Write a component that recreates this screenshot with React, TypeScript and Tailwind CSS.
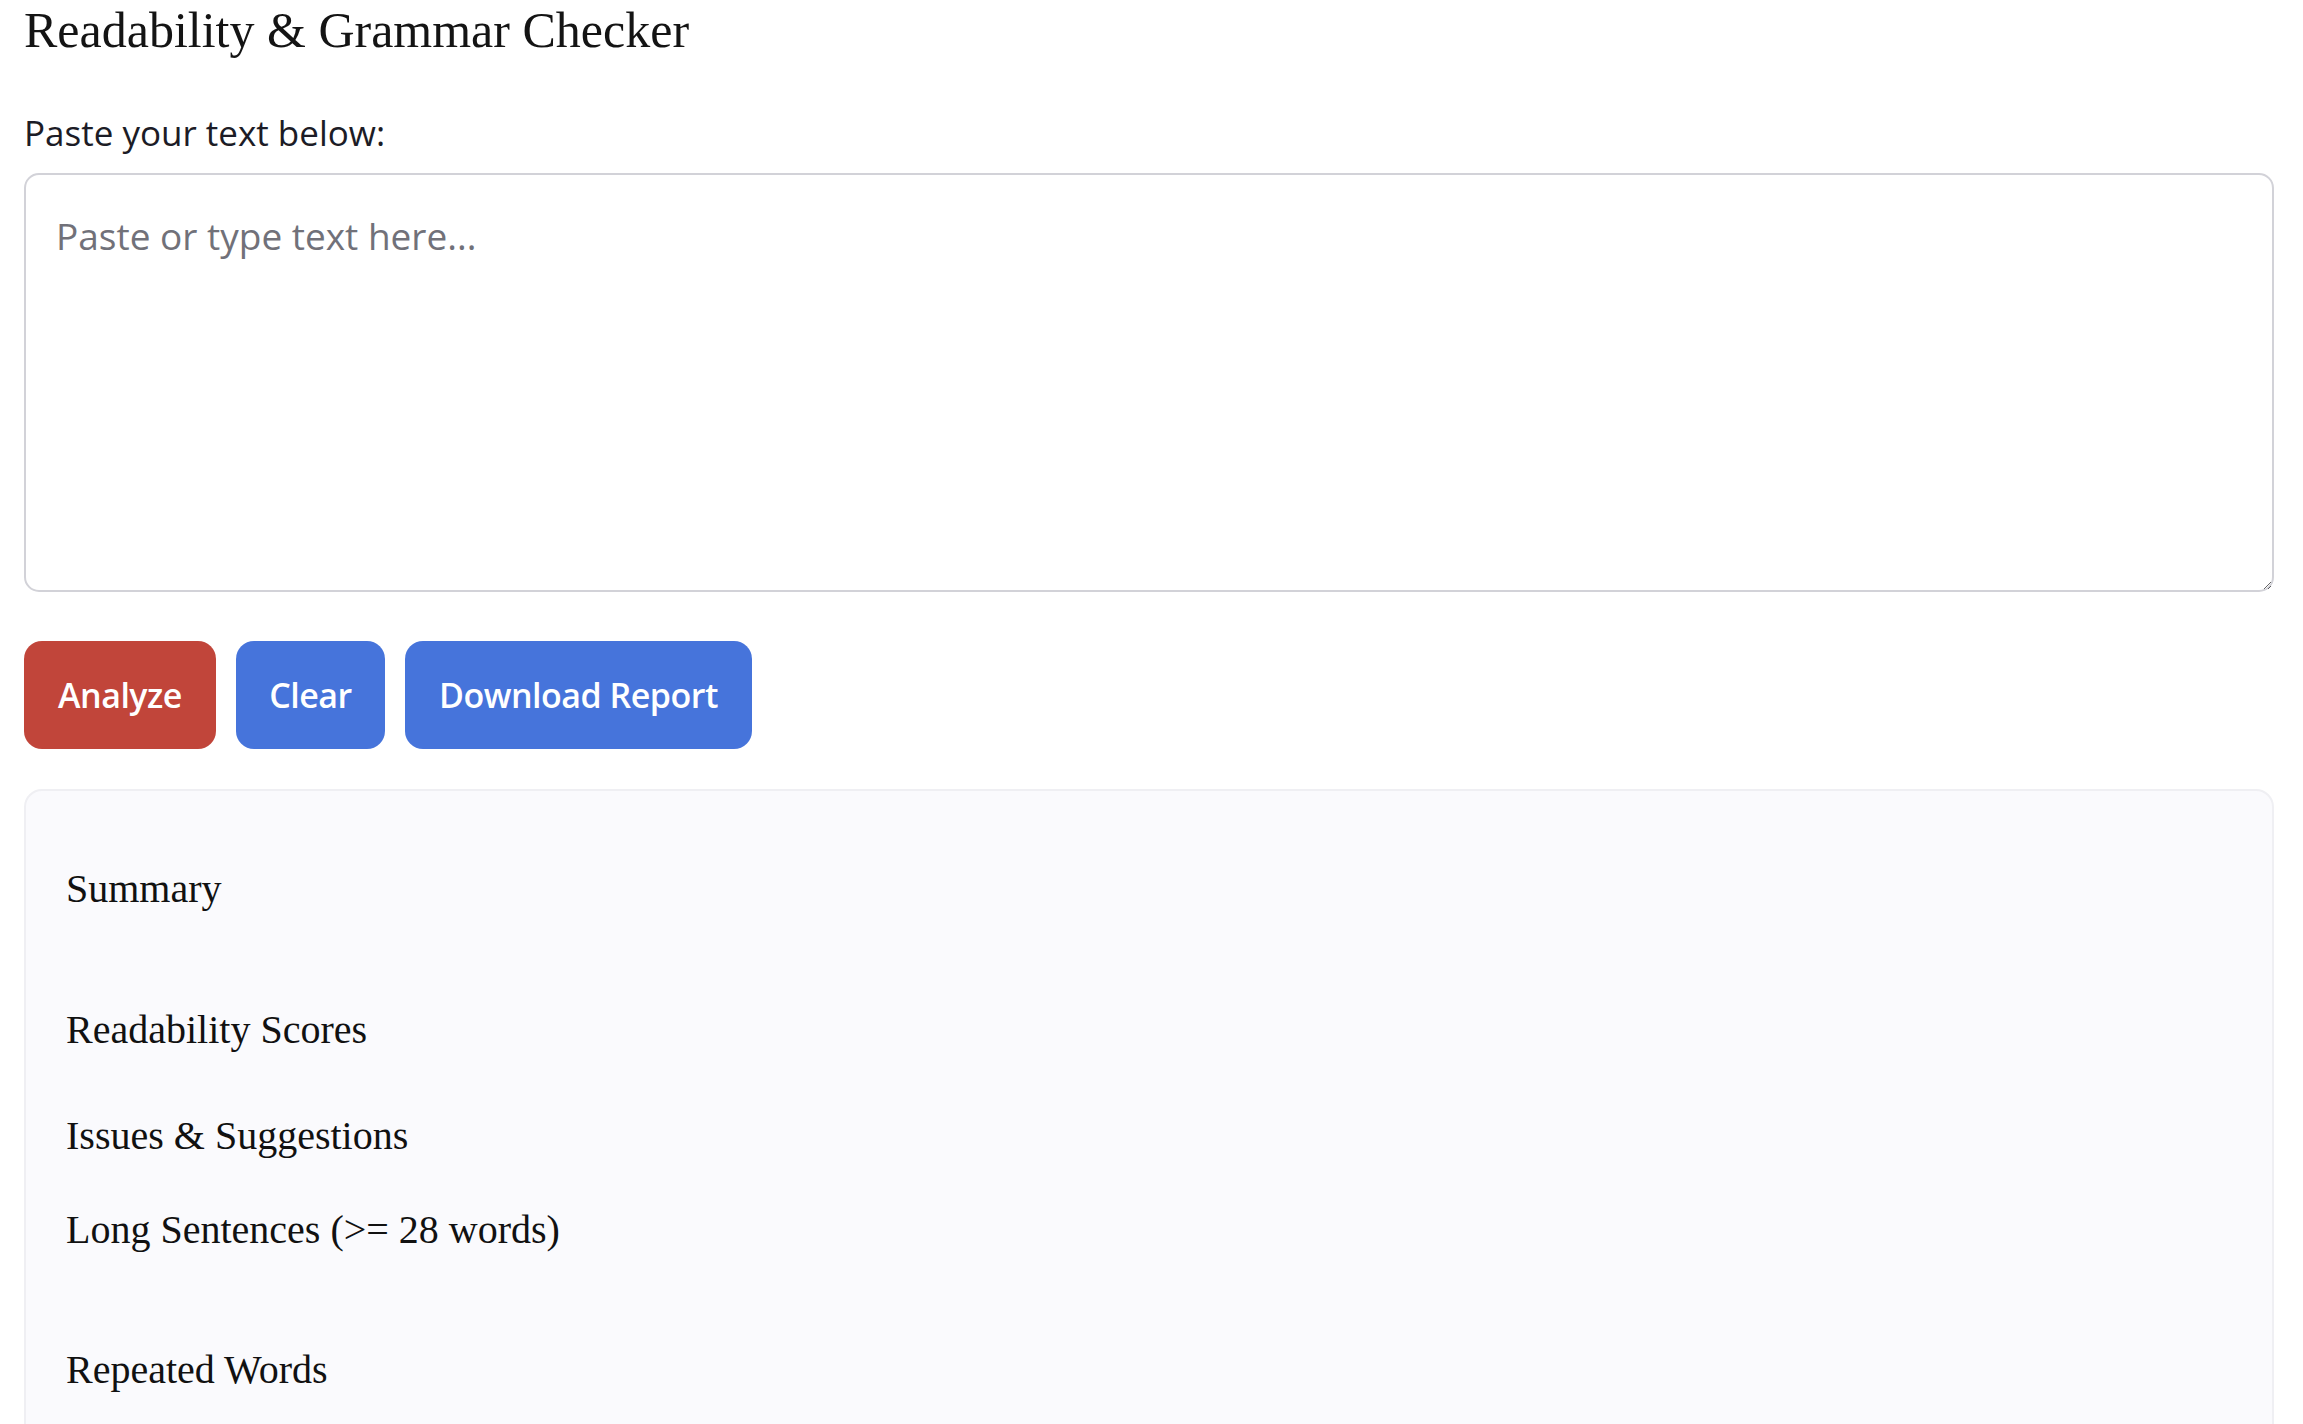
export default function App() {
  const sans = "font-['Open_Sans','Noto_Sans',sans-serif]";
  return (
    <div className="min-h-screen bg-white pl-[24px] pr-[29px]">
      <h1 className="pt-[1px] font-['Liberation_Serif','Times_New_Roman',serif] text-[50px] font-normal leading-[58px] text-[#141414]">
        Readability &amp; Grammar Checker
      </h1>
      <label
        htmlFor="txt"
        className={`mt-[50px] block ${sans} text-[35px] leading-[48px] text-[#1c1c26]`}
      >
        Paste your text below:
      </label>
      <textarea
        id="txt"
        placeholder="Paste or type text here..."
        className={`mt-[16px] block h-[419px] w-full rounded-[15px] border-2 border-[#d2d2d8] bg-white pl-[30px] pr-[30px] pt-[37px] ${sans} text-[37px] leading-[48px] text-[#1c1c26] outline-none placeholder:text-[#717179]`}
      />
      <div className="mt-[49px] flex gap-[20px]">
        <button
          className={`flex h-[108px] w-[192px] items-center justify-center rounded-[18px] bg-[#c1453a] ${sans} text-[34px] font-semibold tracking-[-0.5px] text-white`}
        >
          Analyze
        </button>
        <button
          className={`flex h-[108px] w-[149px] items-center justify-center rounded-[18px] bg-[#4674db] ${sans} text-[34px] font-semibold tracking-[-0.5px] text-white`}
        >
          Clear
        </button>
        <button
          className={`flex h-[108px] w-[347px] items-center justify-center rounded-[18px] bg-[#4674db] ${sans} text-[34px] font-semibold tracking-[-0.5px] text-white`}
        >
          Download Report
        </button>
      </div>
      <div className="mt-[40px] rounded-[18px] border-2 border-[#efeff3] bg-[#fafafd] pb-[200px] pl-[40px] pt-[75px] font-['Liberation_Serif','Times_New_Roman',serif] text-[40px] leading-[46px] text-[#111111]">
        <h3 className="font-normal">Summary</h3>
        <h3 className="mt-[95px] font-normal">Readability Scores</h3>
        <h3 className="mt-[60px] font-normal">Issues &amp; Suggestions</h3>
        <h3 className="mt-[48px] font-normal">Long Sentences (&gt;= 28 words)</h3>
        <h3 className="mt-[94px] font-normal">Repeated Words</h3>
      </div>
    </div>
  );
}
